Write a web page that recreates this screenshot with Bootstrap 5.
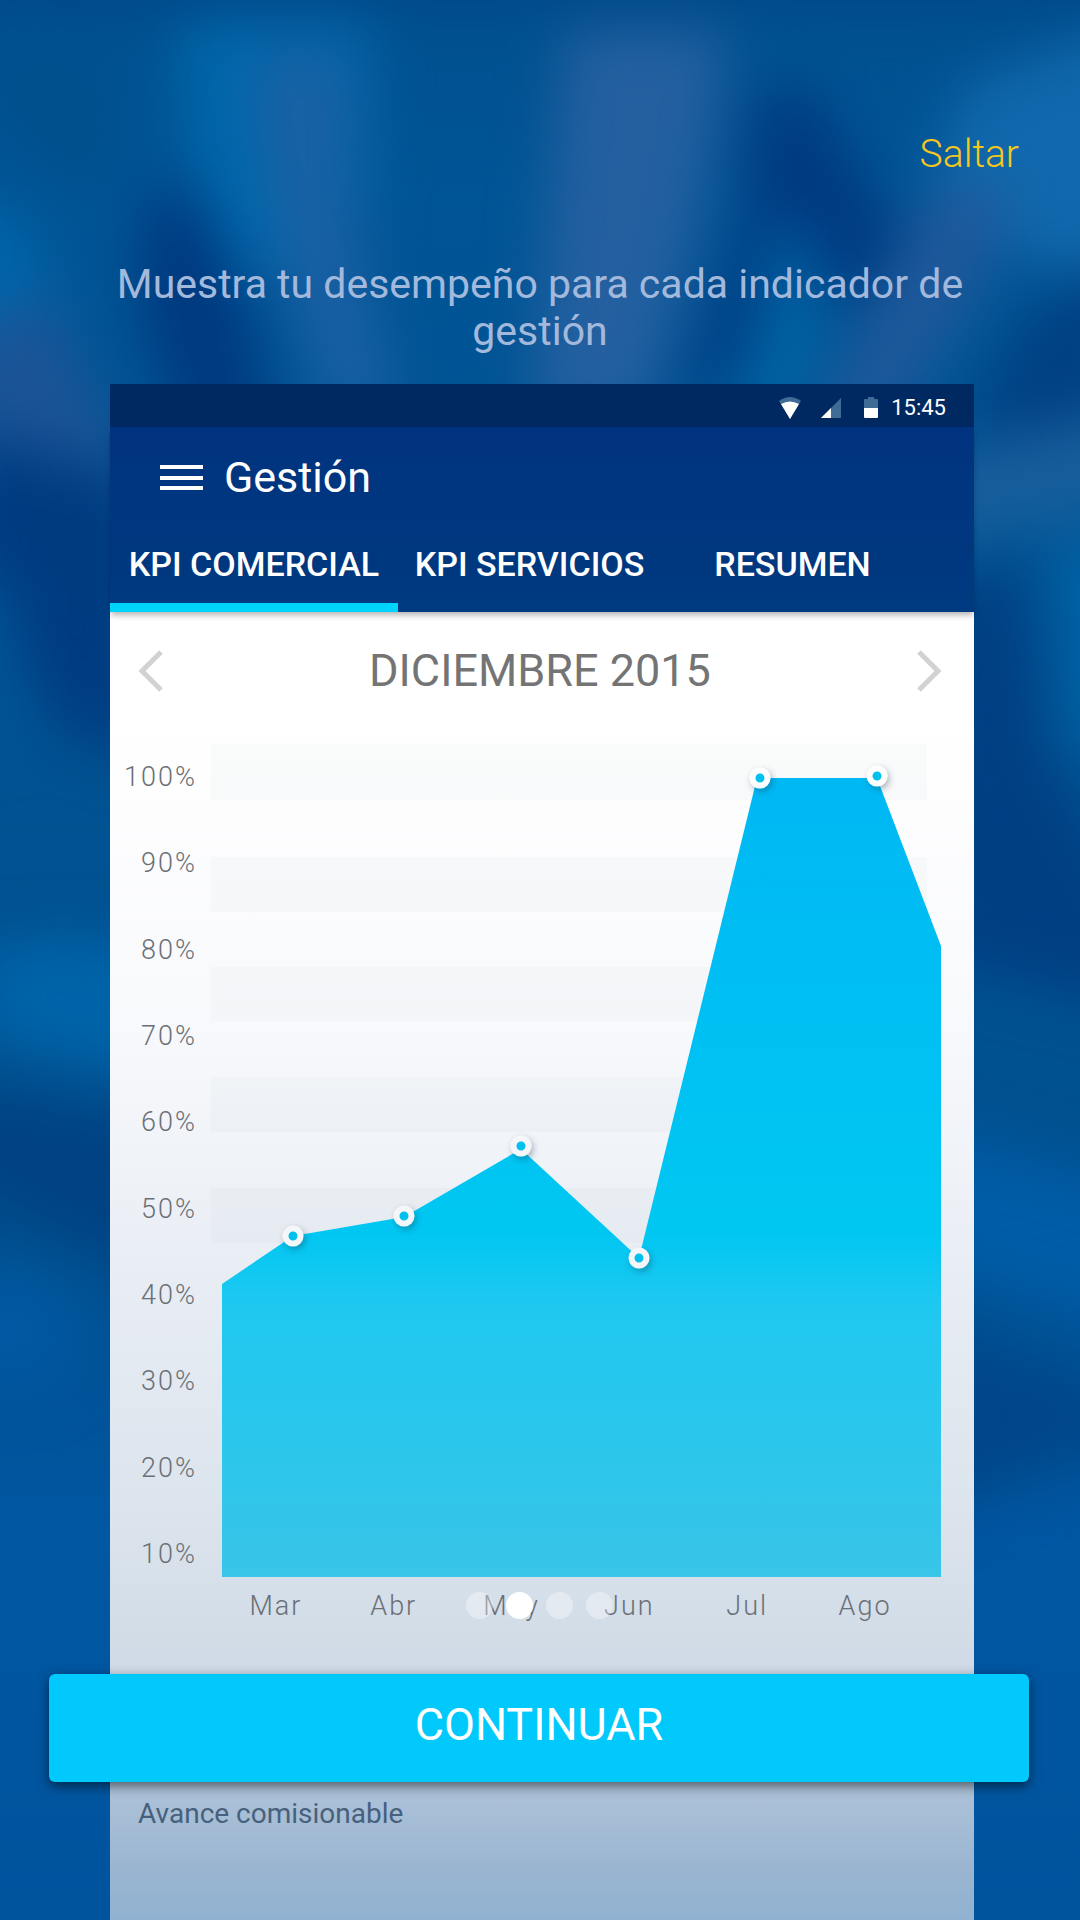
<!DOCTYPE html>
<html lang="es">
<head>
<meta charset="utf-8">
<meta name="viewport" content="width=device-width, initial-scale=1">
<title>Gestión</title>
<link rel="stylesheet" href="https://cdn.jsdelivr.net/npm/bootstrap@5.3.0/dist/css/bootstrap.min.css">
<style>
  body { font-family: Roboto, "Liberation Sans", sans-serif; background: #00559a; }
  .backdrop { z-index: -1; }
  .tour { z-index: 0; }
  .skip-row { padding: 130px 61px 0 0; }
  .skip-link { color: #f6c71c; font-size: 39px; line-height: 48px; font-weight: 300; }
  .tour-title { color: #a3b9dc; font-size: 41px; line-height: 47px; font-weight: 400; margin: 83px 100px 29px; }
  .device { margin: 0 106px 0 110px; }
  .status-bar { background: #002861; height: 43px; padding: 4px 28px 0 0; font-size: 22px; }
  .status-icons { gap: 18px; margin-right: 9px; }
  .app-bar { background: linear-gradient(#00337f, #003a80); color: #fff; box-shadow: 0 4px 6px -1px rgba(0, 0, 0, .3); }
  .title-row { padding: 22px 50px 0; gap: 21px; }
  .app-title { font-size: 43px; line-height: 56px; font-weight: 400; }
  .tab-row { margin-top: 20px; padding-right: 50px; }
  .tab-link { border: 0; border-bottom: 9px solid transparent; background: none; color: #fff; font-size: 34px; font-weight: 500; line-height: 38px; padding: 20px 0; white-space: nowrap; }
  .tab-link.active { border-color: #00d4fb; }
  .tab-main { width: 288px; }
  .tab-other { flex: 1; }
  .screen-body { background: linear-gradient(#fff 0, #fff 8%, #f8f9fc 32%, #e8edf4 51%, #d9e2eb 72%, #cfdae6 81%, #adc2d9 90%, #9bb5d1 96%, #90b2d0 100%); }
  .month-row { height: 118px; padding: 0 32px 0 28px; }
  .month-name { color: #747475; font-size: 45px; line-height: 52px; font-weight: 400; }
  .chart-row { margin-top: 14px; padding-right: 33px; gap: 14px; }
  .axis { color: #6b7077; font-size: 27px; line-height: 40px; font-weight: 300; letter-spacing: 2px; }
  .axis-y { width: 87px; padding: 13px 0 3px; flex: none; }
  .axis-x { margin: 9px 50px 0 107px; }
  .note { color: #47617c; font-size: 28px; line-height: 40px; margin: 168px 28px 0; }
  .bottom-bar { bottom: 138px; padding: 0 51px 0 49px; }
  .dots { gap: 13px; margin-bottom: 55px; }
  .page-dot { width: 27px; height: 27px; border-radius: 50%; border: 0; padding: 0; background: rgba(255, 255, 255, .35); }
  .page-dot.current { background: #fff; }
  .continue-btn { height: 108px; border: 0; border-radius: 6px; background: #02c9fb; color: #fff; font-size: 45px; line-height: 52px; font-weight: 400; padding: 0 0 6px; box-shadow: 0 4px 12px rgba(0, 0, 0, .55); }
</style>
<script src="https://cdn.jsdelivr.net/npm/bootstrap@5.3.0/dist/js/bootstrap.bundle.min.js"></script>
</head>
<body>
<main class="tour position-relative d-flex flex-column min-vh-100 overflow-hidden">
  <svg class="backdrop position-absolute top-0 start-0 w-100 h-100" viewBox="0 0 1080 1920" preserveAspectRatio="none" aria-hidden="true">
    <defs>
      <filter id="soft" color-interpolation-filters="sRGB" x="-40%" y="-40%" width="180%" height="180%"><feGaussianBlur stdDeviation="28"/></filter>
      <linearGradient id="base" x1="0" y1="0" x2="0" y2="1">
        <stop offset="0" stop-color="#00508f"/><stop offset=".1" stop-color="#005596"/><stop offset=".65" stop-color="#00508f"/><stop offset=".8" stop-color="#0057a2"/><stop offset="1" stop-color="#00549e"/>
      </linearGradient>
    </defs>
    <rect width="1080" height="1920" fill="url(#base)"/>
    <g filter="url(#soft)">
      <rect x="-60" y="-60" width="1200" height="65" fill="#004788"/>
      <path d="M-40 60L100 60L120 200L60 180L-40 60Z" fill="#004f8c"/>
      <path d="M180 20H370V180L355 230L240 290Q180 170 180 20Z" fill="#0068ab"/>
      <path d="M250 60L345 50L350 200L395 420H330L280 260Z" fill="#1a60a4"/>
      <path d="M565 30H725Q715 180 645 420H530Q550 220 565 30Z" fill="#2460a0"/>
      <path d="M-60 200L20 220L70 330L90 500H-60Z" fill="#0066ab"/>
      <path d="M-40 340L40 290L140 480L-40 450Z" fill="#1b5496"/>
      <path d="M160 180Q235 180 270 440H190Q105 280 160 180Z" fill="#00397f"/>
      <path d="M755 90L810 90L905 240L855 300L790 300L670 440L740 230Z" fill="#003a80"/>
      <path d="M780 210L820 270L800 400L740 430Z" fill="#0067a8"/>
      <path d="M960 90L1140 20V310L1020 250L930 200Z" fill="#1069ad"/>
      <path d="M930 190L1015 180L980 290L880 440H805Z" fill="#1f599b"/>
      <path d="M1130 250L1040 300L960 430L1110 440Z" fill="#004082"/>
      <path d="M-40 430L140 480V760L60 730L-40 540Z" fill="#003b80"/>
      <rect x="-60" y="590" width="75" height="150" fill="#005597"/>
      <path d="M920 460L1160 400V500L920 550Z" fill="#175e9c"/>
      <path d="M930 590L1020 560L1050 760L1150 940V1010L930 960Z" fill="#003f82"/>
      <path d="M1055 540H1180V750H1065Z" fill="#0063a6"/>
      <path d="M-20 950Q50 930 160 950V1080L-20 1040Z" fill="#0064a9"/>
      <path d="M-60 1080L160 1120V1280L-60 1180Z" fill="#004283"/>
      <ellipse cx="10" cy="1330" rx="70" ry="60" fill="#0059a2"/>
      <path d="M920 1130L1160 1190V1340L920 1270Z" fill="#005ca6"/>
      <path d="M920 1320L1080 1370L1160 1430L920 1520Z" fill="#00468a"/>
    </g>
  </svg>

  <div class="skip-row d-flex justify-content-end"><a class="skip-link text-decoration-none" href="#">Saltar</a></div>
  <h1 class="tour-title text-center">Muestra tu desempeño para cada indicador de gestión</h1>

  <section class="device d-flex flex-column flex-grow-1">
    <div class="status-bar d-flex align-items-center justify-content-end text-white">
      <div class="status-icons d-flex align-items-center">
        <svg width="24" height="24" viewBox="0 0 24 24" aria-hidden="true"><path d="M1 5Q12-3 23 5L12 23Z" fill="#3f6c96"/><path d="M3 8Q12 3 21 8L12 23Z" fill="#fff"/></svg>
        <svg width="22" height="22" viewBox="0 0 22 22" aria-hidden="true"><path d="M1 21L21 1V21Z" fill="#3f6c96"/><path d="M1 21L11 11V21Z" fill="#fff"/></svg>
        <svg width="22" height="24" viewBox="0 0 22 24" aria-hidden="true"><path d="M8 3V1H14V3H17Q18 3 18 4V12H4V4Q4 3 5 3Z" fill="#3f6c96"/><path d="M4 12H18V21Q18 22 17 22H5Q4 22 4 21Z" fill="#fff"/></svg>
      </div>
      <span>15:45</span>
    </div>
    <header class="app-bar position-relative">
      <div class="title-row d-flex align-items-center">
        <button class="btn p-0 border-0 d-flex" type="button" aria-label="Menú"><svg width="43" height="26" viewBox="0 0 43 26"><path d="M0 3H43M0 14H43M0 24H43" stroke="#fff" stroke-width="4"/></svg></button>
        <h2 class="app-title mb-0">Gestión</h2>
      </div>
      <nav class="tab-row d-flex" role="tablist">
        <button class="tab-link tab-main active" type="button" role="tab" aria-selected="true">KPI COMERCIAL</button>
        <button class="tab-link tab-other" type="button" role="tab" aria-selected="false">KPI SERVICIOS</button>
        <button class="tab-link tab-other" type="button" role="tab" aria-selected="false">RESUMEN</button>
      </nav>
    </header>

    <div class="screen-body flex-grow-1">
      <div class="month-row d-flex align-items-center justify-content-between">
        <button class="btn p-0 border-0 d-flex" type="button" aria-label="Mes anterior"><svg width="26" height="42" viewBox="0 0 26 42"><path d="M23 2L4 21L23 40" fill="none" stroke="#d2d2d2" stroke-width="5"/></svg></button>
        <h3 class="month-name mb-0">DICIEMBRE 2015</h3>
        <button class="btn p-0 border-0 d-flex" type="button" aria-label="Mes siguiente"><svg width="26" height="42" viewBox="0 0 26 42"><path d="M3 2L22 21L3 40" fill="none" stroke="#d2d2d2" stroke-width="5"/></svg></button>
      </div>
      <div class="chart-row d-flex">
        <div class="axis axis-y d-flex flex-column justify-content-between text-end">
          <span>100%</span><span>90%</span><span>80%</span><span>70%</span><span>60%</span><span>50%</span><span>40%</span><span>30%</span><span>20%</span><span>10%</span>
        </div>
        <svg class="flex-grow-1" style="min-width:0" viewBox="0 0 730 833" role="img" aria-label="Avance mensual">
          <defs>
            <linearGradient id="area" gradientUnits="userSpaceOnUse" x1="0" y1="34" x2="0" y2="833">
              <stop offset="0" stop-color="#00b8f4"/><stop offset=".57" stop-color="#00c7f2"/><stop offset=".66" stop-color="#1fc8f0"/><stop offset="1" stop-color="#38c5e8"/>
            </linearGradient>
            <filter id="drop" x="-50%" y="-50%" width="220%" height="220%"><feDropShadow dx="2" dy="3" stdDeviation="3" flood-color="#1b3348" flood-opacity=".35"/></filter>
          </defs>
          <g fill="#7d8580" fill-opacity=".035">
            <rect y="0" width="716" height="56"/><rect y="113" width="716" height="55"/><rect y="223" width="716" height="54"/><rect y="333" width="716" height="55"/><rect y="444" width="716" height="55"/>
          </g>
          <path d="M11 540L82 492L193 473L310 405L428 514L546 34H666L730 202V833H11Z" fill="url(#area)"/>
          <g fill="#00c0ee" stroke="#f4f6f9" stroke-width="6" filter="url(#drop)">
            <circle cx="82" cy="492" r="7.5"/><circle cx="193" cy="472" r="7.5"/><circle cx="310" cy="402" r="7.5"/><circle cx="428" cy="514" r="7.5"/>
            <circle cx="549" cy="34" r="7.5" stroke="#fff"/><circle cx="666" cy="32" r="7.5" stroke="#fff"/>
          </g>
        </svg>
      </div>
      <div class="axis axis-x d-flex text-center">
        <span class="col-2">Mar</span><span class="col-2">Abr</span><span class="col-2">May</span><span class="col-2">Jun</span><span class="col-2">Jul</span><span class="col-2">Ago</span>
      </div>
      <p class="note">Avance comisionable</p>
    </div>
  </section>

  <footer class="bottom-bar position-absolute start-0 end-0">
    <div class="dots d-flex justify-content-center">
      <button class="page-dot" type="button" aria-label="Página 1"></button>
      <button class="page-dot current" type="button" aria-label="Página 2" aria-current="true"></button>
      <button class="page-dot" type="button" aria-label="Página 3"></button>
      <button class="page-dot" type="button" aria-label="Página 4"></button>
    </div>
    <button class="continue-btn w-100" type="button">CONTINUAR</button>
  </footer>
</main>
</body>
</html>
